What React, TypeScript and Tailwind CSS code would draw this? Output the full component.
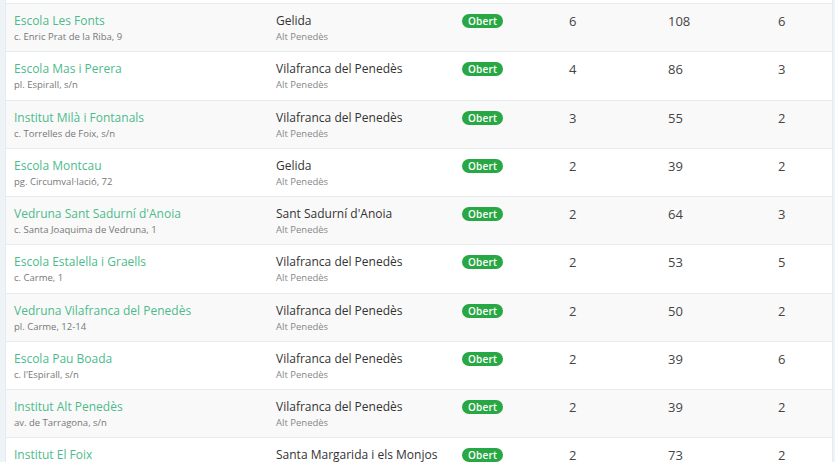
import React from 'react';

interface School {
  name: string;
  address: string;
  town: string;
  county: string;
  a: number;
  b: number;
  c: number;
}

const schools: School[] = [
  { name: 'Escola Les Fonts', address: 'c. Enric Prat de la Riba, 9', town: 'Gelida', county: 'Alt Penedès', a: 6, b: 108, c: 6 },
  { name: 'Escola Mas i Perera', address: 'pl. Espirall, s/n', town: 'Vilafranca del Penedès', county: 'Alt Penedès', a: 4, b: 86, c: 3 },
  { name: 'Institut Milà i Fontanals', address: 'c. Torrelles de Foix, s/n', town: 'Vilafranca del Penedès', county: 'Alt Penedès', a: 3, b: 55, c: 2 },
  { name: 'Escola Montcau', address: 'pg. Circumval·lació, 72', town: 'Gelida', county: 'Alt Penedès', a: 2, b: 39, c: 2 },
  { name: "Vedruna Sant Sadurní d'Anoia", address: 'c. Santa Joaquima de Vedruna, 1', town: "Sant Sadurní d'Anoia", county: 'Alt Penedès', a: 2, b: 64, c: 3 },
  { name: 'Escola Estalella i Graells', address: 'c. Carme, 1', town: 'Vilafranca del Penedès', county: 'Alt Penedès', a: 2, b: 53, c: 5 },
  { name: 'Vedruna Vilafranca del Penedès', address: 'pl. Carme, 12-14', town: 'Vilafranca del Penedès', county: 'Alt Penedès', a: 2, b: 50, c: 2 },
  { name: 'Escola Pau Boada', address: "c. l'Espirall, s/n", town: 'Vilafranca del Penedès', county: 'Alt Penedès', a: 2, b: 39, c: 6 },
  { name: 'Institut Alt Penedès', address: 'av. de Tarragona, s/n', town: 'Vilafranca del Penedès', county: 'Alt Penedès', a: 2, b: 39, c: 2 },
  { name: 'Institut El Foix', address: 'c. Sant Pere, s/n', town: 'Santa Margarida i els Monjos', county: 'Alt Penedès', a: 2, b: 73, c: 2 },
];

const Row: React.FC<{ s: School; striped: boolean }> = ({ s, striped }) => (
  <div
    className={`grid grid-cols-[262px_186px_107px_99px_110px_1fr] h-[48.25px] shrink-0 border-t border-[#e6ebef] ${
      striped ? 'bg-[#f9f9f9]' : 'bg-white'
    }`}
  >
    <div className="pl-[8px] pt-[9px] whitespace-nowrap">
      <div className="text-[12px] leading-[16px] text-[#4dbb8c]">{s.name}</div>
      <div className="text-[9.5px] leading-[15px] text-[#777]">{s.address}</div>
    </div>
    <div className="pl-[8px] pt-[9px] whitespace-nowrap">
      <div className="text-[12px] leading-[16px] text-[#333]">{s.town}</div>
      <div className="text-[9.5px] leading-[15px] text-[#888]">{s.county}</div>
    </div>
    <div className="pl-[8px] pt-[10px] flex items-start">
      <span className="flex items-center h-[14px] px-[6px] rounded-full bg-[#28a745] text-white text-[10px] font-semibold leading-none tracking-[0.2px]">
        Obert
      </span>
    </div>
    <div className="pl-[8px] pt-[9px] text-[13px] leading-[17px] text-[#444]">{s.a}</div>
    <div className="pl-[8px] pt-[9px] text-[13px] leading-[17px] text-[#444]">{s.b}</div>
    <div className="pl-[8px] pt-[9px] text-[13px] leading-[17px] text-[#444]">{s.c}</div>
  </div>
);

export default function App() {
  return (
    <div className="w-[835px] h-[462px] overflow-hidden bg-[#eef3f7] pl-[5px] pr-[2px] font-['Open_Sans',sans-serif]">
      <div className="h-full flex flex-col bg-white border-l border-r border-[#e6ebef]">
        <div className="h-[3px] shrink-0 bg-white" />
        {schools.map((s, i) => (
          <Row key={s.name} s={s} striped={i % 2 === 0} />
        ))}
      </div>
    </div>
  );
}
